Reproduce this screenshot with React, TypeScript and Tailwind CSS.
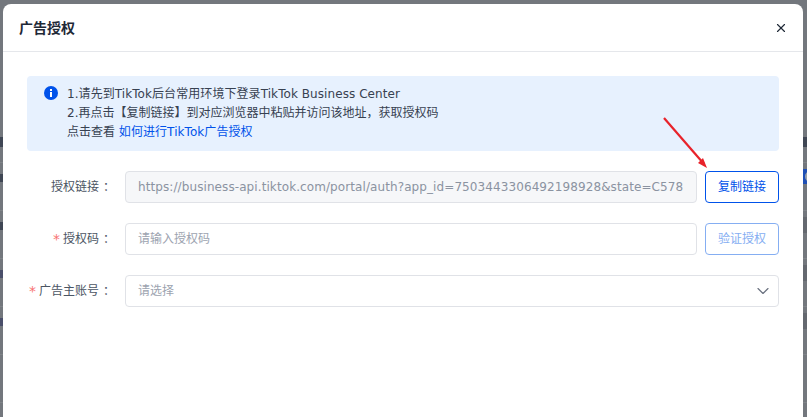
import type { ReactNode } from 'react';
import { ChevronDown, X } from 'lucide-react';

const FormRow = ({
  label,
  required,
  children,
}: {
  label: string;
  required?: boolean;
  children: ReactNode;
}) => (
  <div className="flex h-8 items-center gap-2">
    <div className="flex w-[90px] shrink-0 items-center justify-end pr-[4px] text-xs text-[#4b5563]">
      {required && <span className="mr-[3px] text-[14px] leading-none text-[#f87171]">*</span>}
      {label}
      <span className="ml-1 w-2.5">：</span>
    </div>
    {children}
  </div>
);

export default function App() {
  return (
    <div className="relative h-[417px] w-[807px] overflow-hidden bg-[#73777d] font-['DejaVu_Sans','Noto_Sans_CJK_SC',sans-serif]">
      {/* Page behind the dialog, only its edges show */}
      <div className="absolute inset-0 pt-[115px]">
        {[0, 1, 2, 3, 4, 5].map((i) => (
          <div key={i} className="h-12 border-b border-[#7f8388]" />
        ))}
      </div>
      <div className="absolute right-0 top-[169px] h-[15px] w-1 overflow-hidden bg-[#1e4fb5]">
        <div className="ml-[2px] mt-[2px] h-[11px] w-[11px] rounded-full bg-[#9aa0a8]" />
      </div>
      <div className="absolute right-0 top-[217px] h-4 w-1 bg-[#64686f]" />
      <div className="absolute right-0 top-[265px] h-4 w-1 bg-[#64686f]" />
      <div className="absolute right-0 top-[313px] h-4 w-1 bg-[#64686f]" />
      <div className="absolute right-0 top-[137px] h-[10px] w-1 bg-[#3f4654]" />
      <div className="absolute left-0 top-[137px] h-[10px] w-[3px] bg-[#3f4654]" />
      <div className="absolute left-0 top-[174px] h-2 w-[3px] bg-[#3f4654]" />
      <div className="absolute left-0 top-[222px] h-2 w-[3px] bg-[#3f4654]" />
      <div className="absolute left-0 top-[270px] h-2 w-[3px] bg-[#4a4f6a]" />
      <div className="absolute left-0 top-[318px] h-2 w-[3px] bg-[#4a4f6a]" />

      <div className="absolute left-[3px] top-1 h-[460px] w-[800px] rounded-t-lg bg-white">
        {/* Header */}
        <div className="flex h-[48px] items-center justify-between border-b border-[#e5e7eb] pl-4 pr-[15px]">
          <h2 className="text-sm font-bold text-[#1f2937]">广告授权</h2>
          <X className="h-[14px] w-[14px] text-[#1f2937]" strokeWidth={2} />
        </div>

        <div className="px-6 pt-6">
          {/* Notice */}
          <div className="flex h-[75px] gap-[9px] rounded bg-[#e7f1fe] pl-[17px] pr-4 pt-[9px] text-xs leading-[19px] text-[#374151]">
            <svg viewBox="0 0 14 14" className="mt-[1px] h-[14px] w-[14px] shrink-0">
              <circle cx="7" cy="7" r="7" fill="#0052ea" />
              <rect x="6" y="3" width="2" height="2" fill="#fff" />
              <rect x="6" y="6" width="2" height="5" fill="#fff" />
            </svg>
            <div>
              <p className="tracking-[0.07px]">1.请先到TikTok后台常用环境下登录TikTok Business Center</p>
              <p>2.再点击【复制链接】到对应浏览器中粘贴并访问该地址，获取授权码</p>
              <p>
                点击查看 <span className="tracking-[0.07px] text-[#0052ea]">如何进行TikTok广告授权</span>
              </p>
            </div>
          </div>

          {/* Form */}
          <div className="mt-5 flex flex-col gap-5">
            <FormRow label="授权链接">
              <div className="flex h-8 w-[572px] items-center overflow-hidden whitespace-nowrap rounded border border-[#e0e2e7] bg-[#f6f7f9] px-3 text-xs tracking-[0.09px] text-[#8b93a1]">
                https://business-api.tiktok.com/portal/auth?app_id=7503443306492198928&state=C578
              </div>
              <button className="h-8 w-[74px] rounded border border-[#0052ea] text-xs text-[#0052ea]">复制链接</button>
            </FormRow>
            <FormRow label="授权码" required>
              <div className="flex h-8 w-[572px] items-center rounded border border-[#e0e2e7] px-3 text-xs text-[#9ca3af]">
                请输入授权码
              </div>
              <button className="h-8 w-[74px] rounded border border-[#85aef2] text-xs text-[#85aef2]">验证授权</button>
            </FormRow>
            <FormRow label="广告主账号" required>
              <div className="flex h-8 w-[654px] items-center justify-between rounded border border-[#e0e2e7] pl-3 pr-[5px] text-xs text-[#9ca3af]">
                请选择
                <ChevronDown className="h-5 w-5 text-[#6b7280]" strokeWidth={1.4} />
              </div>
            </FormRow>
          </div>
        </div>
      </div>

      {/* Annotation arrow */}
      <svg viewBox="0 0 807 417" className="absolute inset-0 h-[417px] w-[807px]">
        <line x1="664" y1="118" x2="704" y2="164" stroke="#e8222a" strokeWidth="2.2" />
        <polygon points="707,168 698,163 703,158" fill="#e8222a" />
      </svg>
    </div>
  );
}
